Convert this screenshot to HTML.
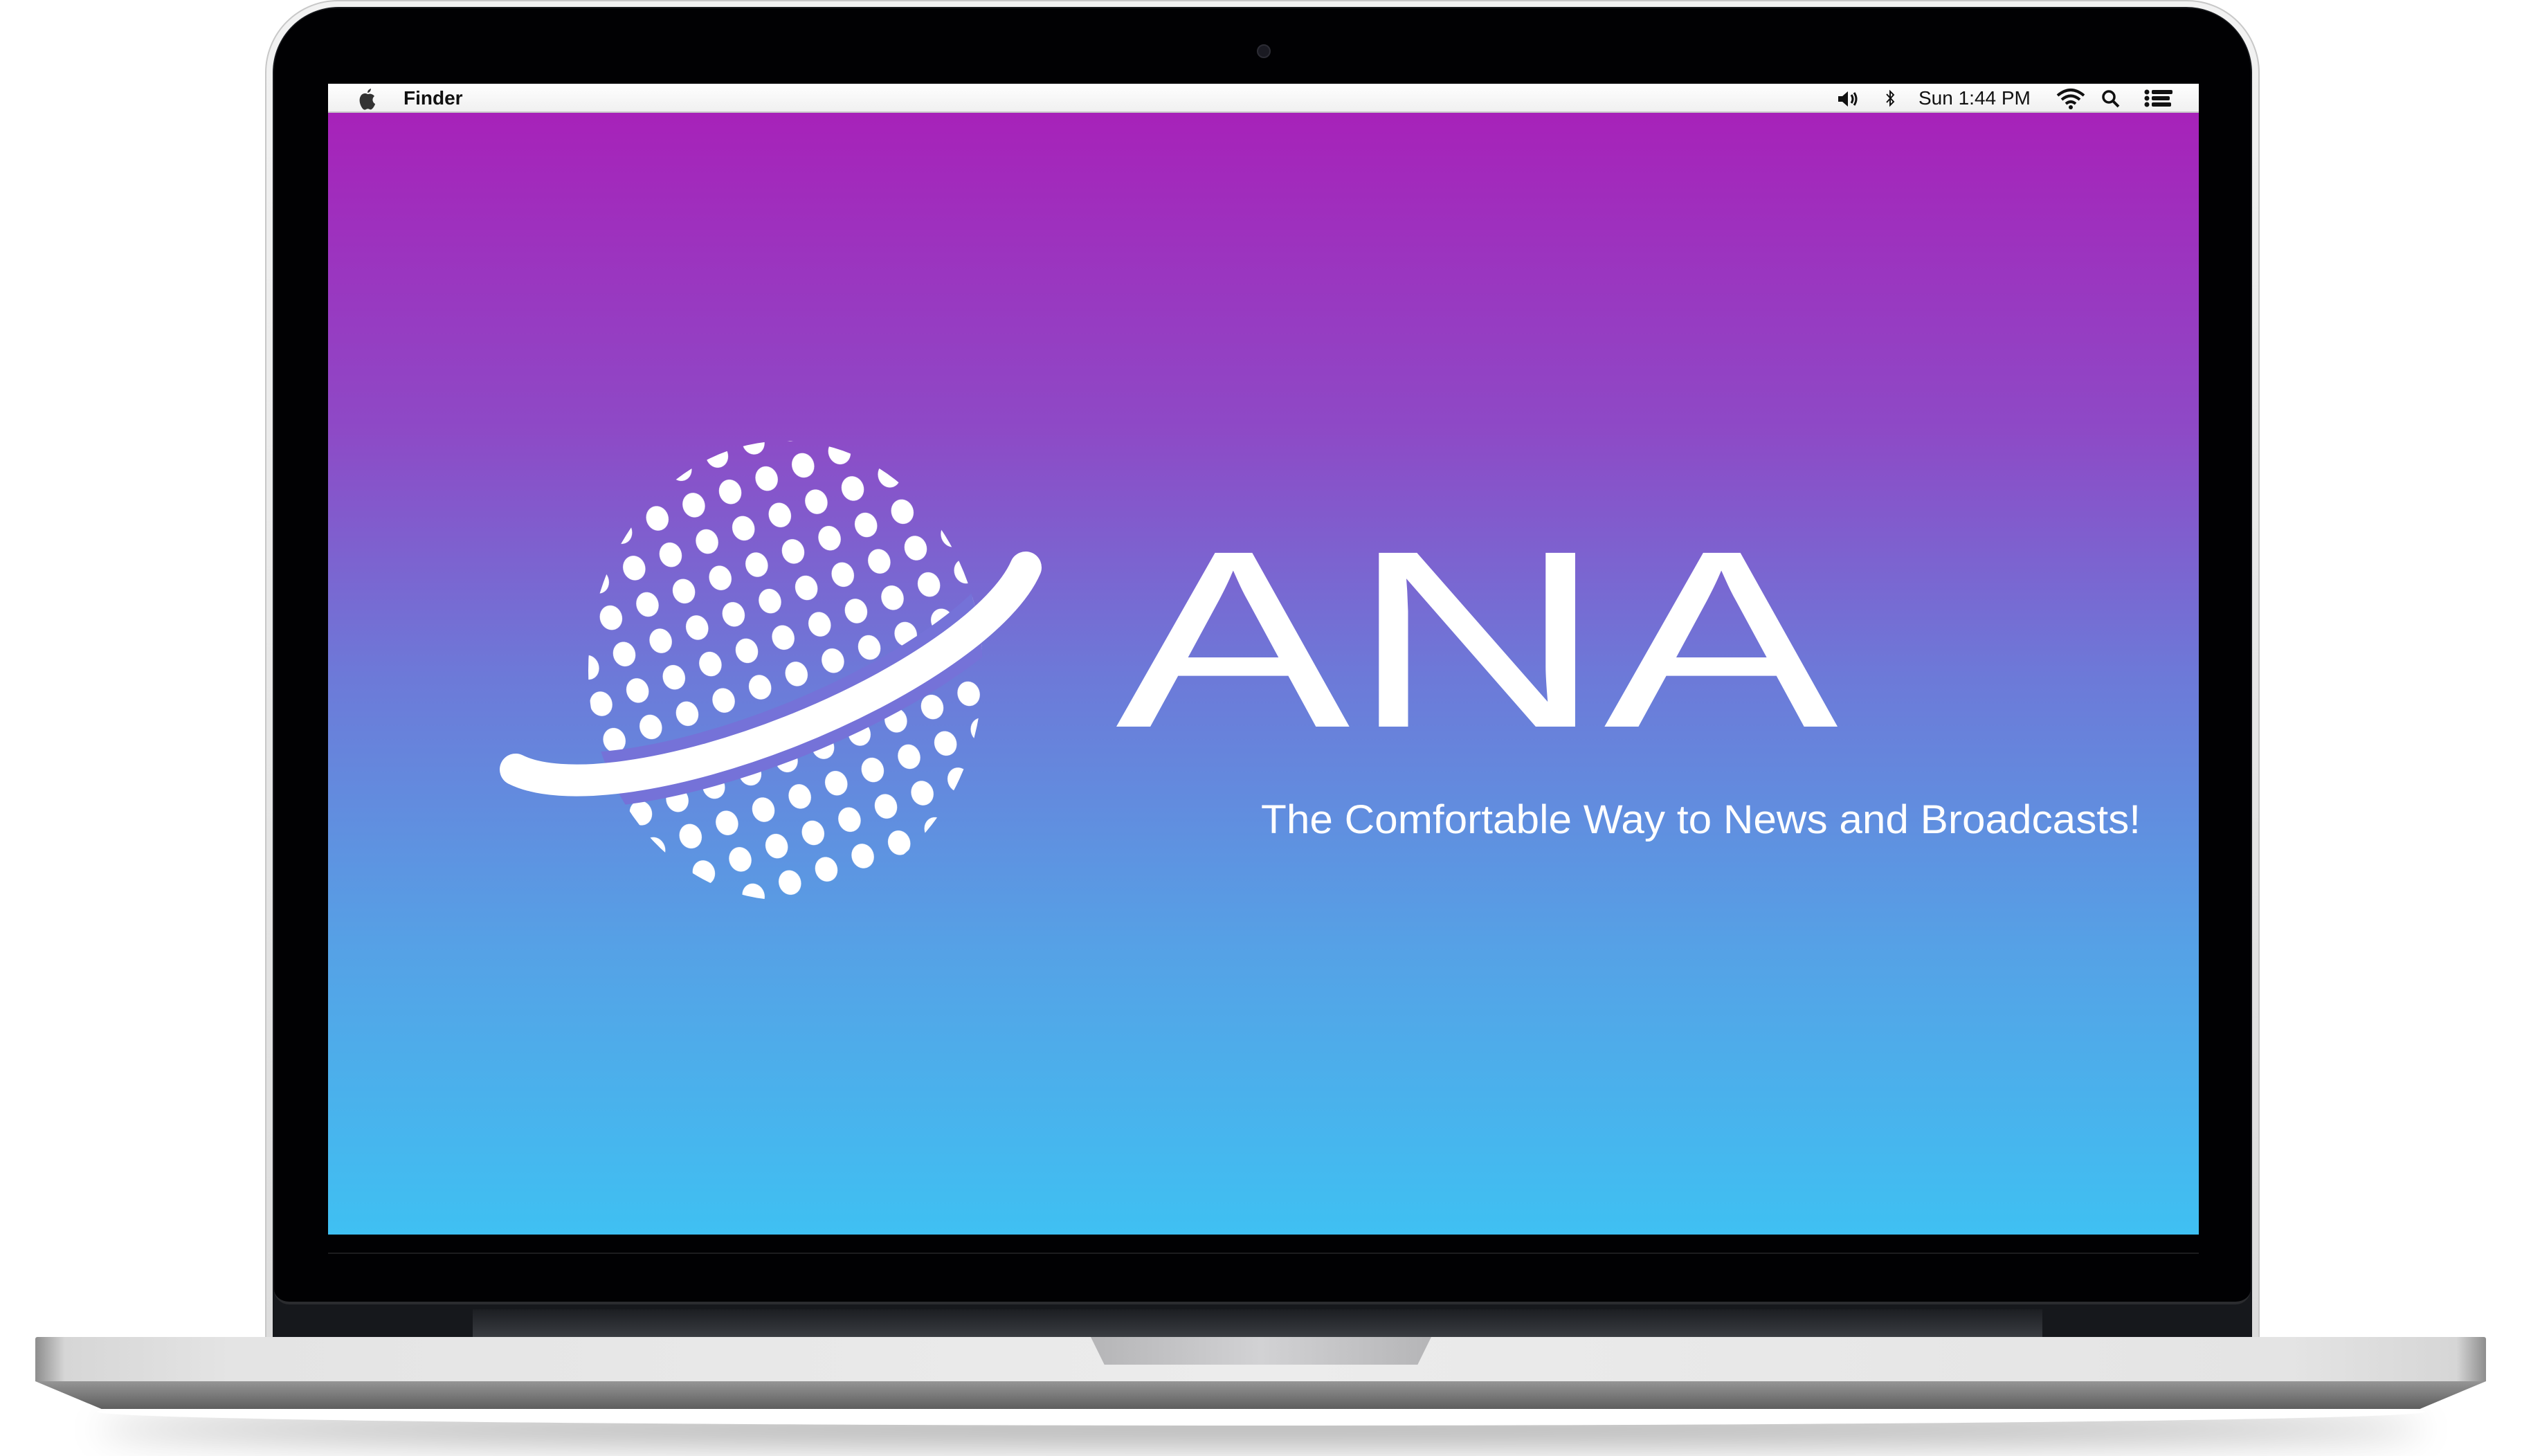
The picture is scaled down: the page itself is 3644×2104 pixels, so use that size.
<!DOCTYPE html>
<html><head><meta charset="utf-8"><style>
html,body{margin:0;padding:0;background:#fff;}
body{width:3644px;height:2104px;position:relative;overflow:hidden;font-family:"Liberation Sans",sans-serif;}
.abs{position:absolute;}
#lidrim{left:383px;top:0;width:2882px;height:1940px;border-radius:105px 105px 0 0;background:linear-gradient(#f2f2f2,#dcdcdc);border:2px solid #c8c8c8;box-sizing:border-box;}
#lid{left:394px;top:10px;width:2860px;height:1930px;border-radius:95px 95px 0 0;background:#16181c;}
#bezel{left:396px;top:12px;width:2856px;height:1873px;border-radius:92px 92px 22px 22px;background:#010103;border-bottom:4px solid #2b2c2f;box-sizing:border-box;}
#strip{left:683px;top:1892px;width:2268px;height:42px;background:linear-gradient(#1c1e22,#3b3e43);}
#screen{left:474px;top:163px;width:2703px;height:1621px;background:linear-gradient(#a722b9 0%,#8e49c6 28%,#6d79d8 50%,#55a2e6 75%,#3fc0f2 100%);}
#menubar{left:474px;top:121px;width:2703px;height:42px;background:linear-gradient(#ffffff,#f0f0f0);border-bottom:2px solid #c9c9c9;box-sizing:border-box;font-size:28px;color:#111;}
#line{left:474px;top:1810px;width:2703px;height:2px;background:#1c1c1e;}
#cam{left:1816px;top:64px;width:16px;height:16px;border-radius:50%;background:#1a1a22;border:2px solid #2c2c34;}
#basetop{left:51px;top:1932px;width:3541px;height:64px;background:linear-gradient(90deg,#8d8d8d 0%,#d6d6d6 1.2%,#e4e4e4 8%,#ececec 50%,#e4e4e4 92%,#d6d6d6 98.8%,#8d8d8d 100%);border-radius:3px 3px 0 0;}
#basebot{left:51px;top:1996px;width:3541px;height:40px;background:linear-gradient(#959595,#5e5e5e);clip-path:polygon(0 0,100% 0,97.3% 100%,2.7% 100%);}
#shadow{left:140px;top:2020px;width:3364px;height:40px;border-radius:50%;box-shadow:0 25px 50px rgba(0,0,0,0.4);}
#notch{left:1576px;top:1932px;width:492px;height:40px;background:linear-gradient(90deg,#b5b5b7,#d2d2d4 50%,#b5b5b7);clip-path:polygon(0 0,100% 0,96% 100%,4% 100%);border-radius:0 0 12px 12px;}
</style></head><body>
<div id="shadow" class="abs"></div>
<div id="lidrim" class="abs"></div>
<div id="lid" class="abs"></div>
<div id="bezel" class="abs"></div>
<div id="strip" class="abs"></div>
<div id="cam" class="abs"></div>
<div id="screen" class="abs"></div>
<div id="line" class="abs"></div>
<div id="menubar" class="abs">
 <svg class="abs" style="left:42px;top:5px" width="30" height="34" viewBox="0 0 30 34"><path d="M20 2c-3 1-5 3-5 6 3 0 5-3 5-6zM15 10c-3-2-8-1-10 3-3 5-1 13 3 18 2 2 3 2 5 1 2-1 3-1 5 0 2 1 3 0 5-2 2-3 3-5 3-6-4-2-5-8-1-11-2-3-6-4-9-3z" fill="#333"/></svg>
 <span class="abs" style="left:109px;top:5px;font-weight:bold;">Finder</span>
 <svg class="abs" style="left:2180px;top:8px" width="36" height="28" viewBox="0 0 36 28"><path d="M2 10h6l8-7v22l-8-7H2z" fill="#111"/><path d="M21 8q4 6 0 12M25 5q6 9 0 18" stroke="#111" stroke-width="3" fill="none"/></svg>
 <svg class="abs" style="left:2250px;top:7px" width="14" height="28" viewBox="0 0 14 28"><path d="M2 8l10 11-5 5V4l5 5-10 11" stroke="#111" stroke-width="2" fill="none"/></svg>
 <span class="abs" style="left:2298px;top:5px;">Sun 1:44 PM</span>
 <svg class="abs" style="left:2496px;top:6px" width="44" height="32" viewBox="0 0 44 32"><path d="M3 11q19-16 38 0M9 17q13-11 26 0M15 23q7-6 14 0" stroke="#111" stroke-width="4" fill="none"/><circle cx="22" cy="28" r="3" fill="#111"/></svg>
 <svg class="abs" style="left:2562px;top:8px" width="30" height="28" viewBox="0 0 30 28"><circle cx="11" cy="11" r="8" stroke="#111" stroke-width="3.5" fill="none"/><path d="M17 17l8 8" stroke="#111" stroke-width="4"/></svg>
 <svg class="abs" style="left:2624px;top:8px" width="42" height="26" viewBox="0 0 42 26"><circle cx="4" cy="4" r="3.5" fill="#111"/><circle cx="4" cy="13" r="3.5" fill="#111"/><circle cx="4" cy="22" r="3.5" fill="#111"/><rect x="11" y="1" width="30" height="6" rx="2" fill="#111"/><rect x="11" y="10" width="26" height="6" rx="2" fill="#111"/><rect x="11" y="19" width="28" height="6" rx="2" fill="#111"/></svg>
</div>
<svg class="abs" style="left:0;top:0" width="3644" height="2104" viewBox="0 0 3644 2104">
 <defs>
  <pattern id="dots" width="56" height="56" patternUnits="userSpaceOnUse" patternTransform="rotate(-20 1132 969)">
   <ellipse cx="28" cy="28" rx="16" ry="18" fill="#fff"/>
  </pattern>
  <clipPath id="gc"><ellipse cx="1135" cy="969" rx="285" ry="332"/></clipPath>
 </defs>
 <rect x="800" y="620" width="640" height="700" fill="url(#dots)" clip-path="url(#gc)"/>
 <path d="M745 1112 A 415 135 -22 0 0 1482 820" stroke="#7572d8" stroke-width="80" fill="none" stroke-linecap="round" clip-path="url(#gc)"/>
 <path d="M745 1112 A 415 135 -22 0 0 1482 820" stroke="#fff" stroke-width="46" fill="none" stroke-linecap="round"/>
 <text x="1612" y="1050" fill="#fff" font-family="Liberation Sans" font-size="365" textLength="1044" lengthAdjust="spacingAndGlyphs">ANA</text>
 <text x="1822" y="1204" fill="#fff" font-family="Liberation Sans" font-size="58" textLength="1271" lengthAdjust="spacingAndGlyphs">The Comfortable Way to News and Broadcasts!</text>
</svg>
<div id="basetop" class="abs"></div>
<div id="basebot" class="abs"></div>
<div id="notch" class="abs"></div>
</body></html>
